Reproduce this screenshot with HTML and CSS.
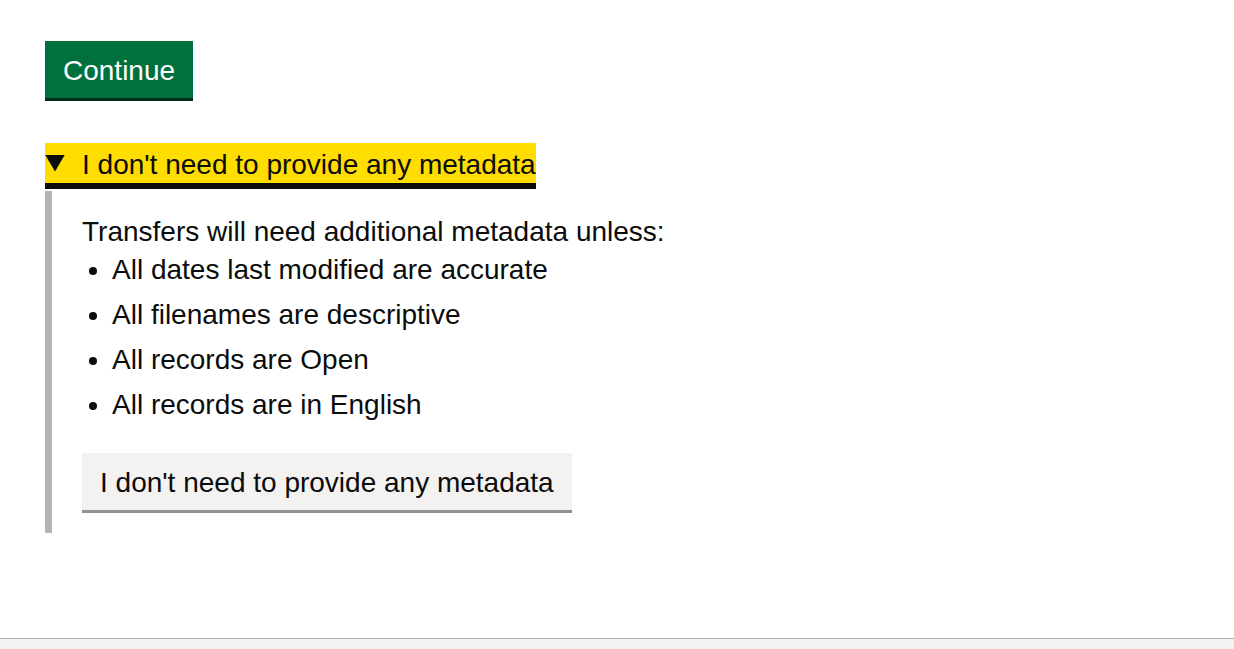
FILE: index.html
```html
<!DOCTYPE html>
<html lang="en">
<head>
<meta charset="utf-8">
<title>Additional metadata</title>
<link rel="stylesheet" href="styles.css">
</head>
<body>
<main class="main">
  <button class="button" type="button">Continue</button>
  <details class="details" open>
    <summary class="summary"><span class="summary-text">I don't need to provide any metadata</span></summary>
    <div class="details-text">
      <p class="intro">Transfers will need additional metadata unless:</p>
      <ul class="list">
        <li>All dates last modified are accurate</li>
        <li>All filenames are descriptive</li>
        <li>All records are Open</li>
        <li>All records are in English</li>
      </ul>
      <button class="button button-secondary" type="button">I don't need to provide any metadata</button>
    </div>
  </details>
</main>
<footer class="footer"></footer>
</body>
</html>
```
FILE: styles.css
```css
* {
  box-sizing: border-box;
}

body {
  display: flex;
  flex-direction: column;
  min-height: 100vh;
  margin: 0;
  background: #fff;
  color: #0b0c0c;
  font-family: "Liberation Sans", Arial, sans-serif;
  font-size: 28px;
  line-height: 38px;
}

.main {
  flex: 1;
  padding: 41px 45px 0;
}

.button {
  display: block;
  margin: 0;
  padding: 11px 18px 8px;
  border: 0;
  border-bottom: 3px solid #002d18;
  border-radius: 0;
  background: #00703c;
  color: #fff;
  font: inherit;
}

.button-secondary {
  border-bottom-color: #929191;
  background: #f3f2f1;
  color: #0b0c0c;
}

.details {
  margin-top: 42px;
}

.summary {
  display: flex;
  align-items: center;
  width: fit-content;
  border-bottom: 6px solid #0b0c0c;
  background: #fd0;
  line-height: 36px;
  list-style: none;
}

.summary::before {
  content: "";
  width: 20px;
  height: 17px;
  margin-right: 17px;
  background: #0b0c0c;
  clip-path: polygon(0 0, 100% 0, 50% 100%);
}

.summary-text {
  padding-top: 4px;
}

.details-text {
  margin-top: 2px;
  padding: 22px 30px 20px;
  border-left: 7px solid #b1b4b6;
}

.intro {
  margin: 0;
}

.list {
  margin: 0 0 29px;
  padding-left: 30px;
}

.list li + li {
  margin-top: 7px;
}

.footer {
  height: 11px;
  border-top: 1px solid #b1b4b6;
  background: #f3f2f1;
}
```
